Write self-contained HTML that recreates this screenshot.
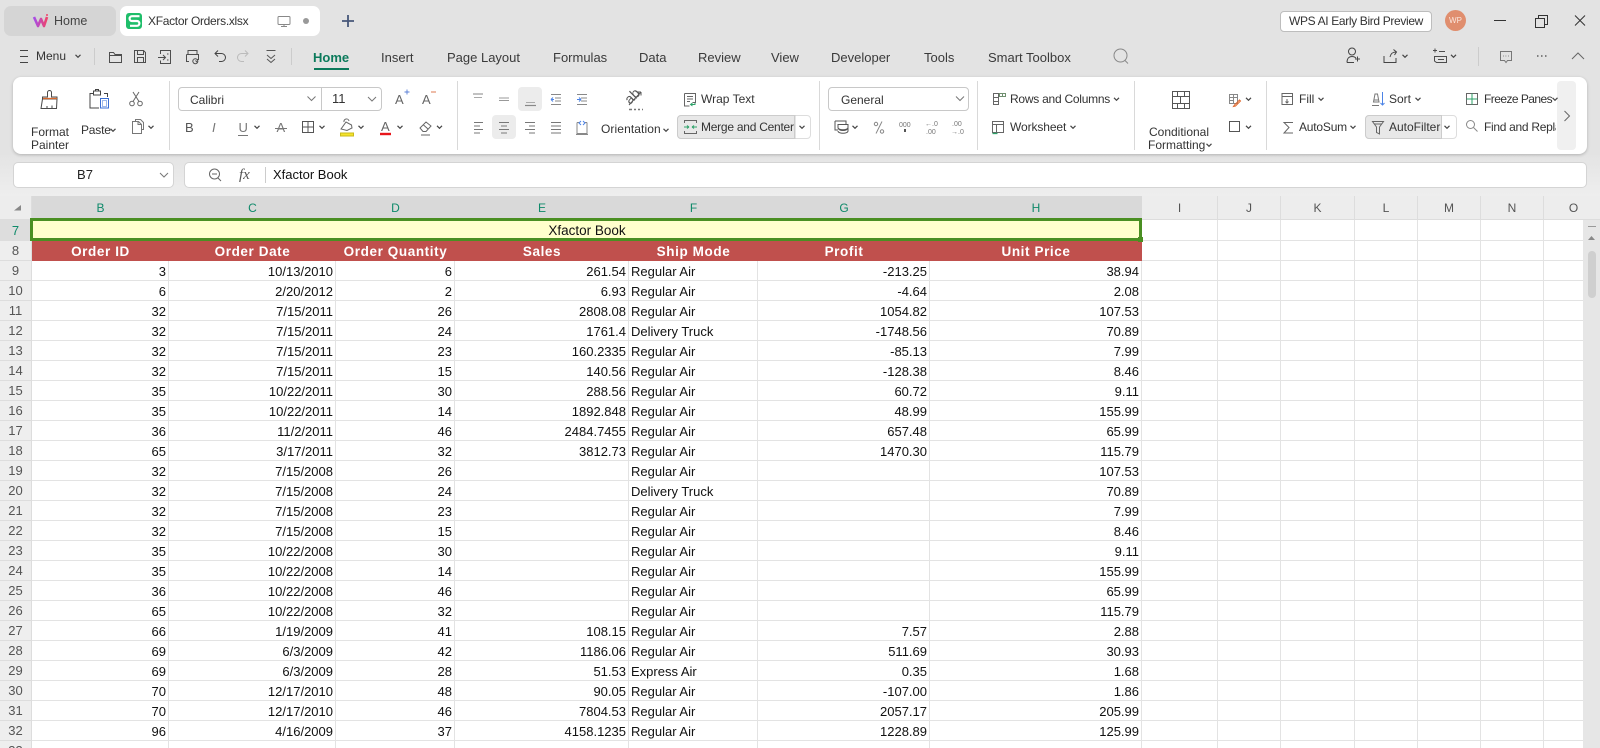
<!DOCTYPE html>
<html><head><meta charset="utf-8"><title>XFactor Orders.xlsx</title>
<style>
html,body{margin:0;padding:0;width:1600px;height:748px;overflow:hidden;background:#e3e3e3;font-family:"Liberation Sans",sans-serif;color:#333}
.a{position:absolute;box-sizing:border-box}
.t{position:absolute;white-space:nowrap;line-height:16px;font-size:12px;color:#333}
.m{font-size:13px;color:#3a3a3a}
.c{text-align:center;transform:translateX(-50%)}
svg.i{position:absolute;left:0;top:0;z-index:5;pointer-events:none}
svg text{font-family:"Liberation Sans",sans-serif;stroke:none}
#g{position:absolute;left:0;top:196px;width:1600px;height:552px;overflow:hidden;background:#fff}
table{border-collapse:separate;border-spacing:0;table-layout:fixed;width:1604px;position:absolute;left:0;top:0}
td{box-sizing:border-box;padding:2px 2px 0 2px;border-right:1px solid #e3e3e3;border-bottom:1px solid #e3e3e3;font-size:13px;line-height:16px;height:20px;color:#111;text-align:right;white-space:nowrap;overflow:hidden;background:#fff}
td.l{text-align:left}
td.r{background:#eee;color:#555;text-align:center;font-size:13px;padding:1px 0 0 0;border-right:1px solid #ddd;border-bottom:1px solid #ddd}
tr.h td{background:#ededed;color:#555;text-align:center;font-size:12px;height:24px;border-right:1px solid #ddd;border-bottom:1px solid #ddd;padding:0}
tr.h td.s{background:#d9d9d9;color:#0f8a6a;border-right:0;border-bottom:0}
tr.x td{background:#c0504d;color:#fff;font-weight:bold;text-align:center;font-size:13.5px;letter-spacing:.6px;border:0;height:20px;padding:1px 0 0 0}
tr.x td.r{background:#eee;color:#555;font-weight:normal;font-size:13px;letter-spacing:0;border-right:1px solid #ddd;border-bottom:1px solid #ddd}
tr.x td.w{background:#fff;border-right:1px solid #e3e3e3;border-bottom:1px solid #e3e3e3}
td.ti{background:#ffc;text-align:center;height:21px;color:#111;border:0;padding:0;font-size:13.5px}
td.rs{background:#ddd!important;color:#0f8a6a!important;height:21px}
</style></head><body>

<div class="a" style="left:0;top:155px;width:1600px;height:41px;background:linear-gradient(#e4e4e4,#eee)"></div>
<div class="a" style="left:4px;top:6px;width:112px;height:30px;background:#d5d5d5;border-radius:7px"></div>
<div class="a" style="left:120px;top:6px;width:200px;height:30px;background:#fff;border-radius:7px"></div>
<div class="t" style="left:54px;top:13px;color:#444;font-size:12.5px">Home</div>
<div class="a" style="left:126px;top:13px;width:16px;height:16px;background:#1fbe6a;border-radius:3px"></div>
<div class="t" style="left:148px;top:13px;letter-spacing:-.3px">XFactor Orders.xlsx</div>

<div class="a" style="left:1280px;top:11px;width:152px;height:21px;background:#fff;border:1px solid #bdbdbd;border-radius:4px"></div>
<div class="t" style="left:1289px;top:13px;letter-spacing:-.35px">WPS AI Early Bird Preview</div>
<div class="a" style="left:1445px;top:10px;width:21px;height:21px;background:#e08e6e;border-radius:50%"></div>
<div class="t c" style="left:1455.500px;top:12.500px;font-size:8px;color:#fbe6dc">WP</div>

<div class="t" style="left:36px;top:48px;color:#333">Menu</div>
<div class="t m" style="left:313px;top:50px;font-weight:bold;color:#0b7a5b">Home</div>
<div class="a" style="left:314px;top:68px;width:35px;height:2px;background:#0b7a5b"></div>
<div class="t m" style="left:381px;top:50px">Insert</div>
<div class="t m" style="left:447px;top:50px">Page Layout</div>
<div class="t m" style="left:553px;top:50px">Formulas</div>
<div class="t m" style="left:639px;top:50px">Data</div>
<div class="t m" style="left:698px;top:50px">Review</div>
<div class="t m" style="left:771px;top:50px">View</div>
<div class="t m" style="left:831px;top:50px">Developer</div>
<div class="t m" style="left:924px;top:50px">Tools</div>
<div class="t m" style="left:988px;top:50px">Smart Toolbox</div>

<div class="a" style="left:13px;top:77px;width:1574px;height:77px;background:#fff;border-radius:8px;box-shadow:0 1px 3px rgba(0,0,0,.22)"></div>
<div class="a" style="left:169px;top:81px;width:1px;height:69px;background:#d9d9d9"></div>
<div class="a" style="left:457px;top:81px;width:1px;height:69px;background:#d9d9d9"></div>
<div class="a" style="left:819px;top:81px;width:1px;height:69px;background:#d9d9d9"></div>
<div class="a" style="left:977px;top:81px;width:1px;height:69px;background:#d9d9d9"></div>
<div class="a" style="left:1134px;top:81px;width:1px;height:69px;background:#d9d9d9"></div>
<div class="a" style="left:1266px;top:81px;width:1px;height:69px;background:#d9d9d9"></div>

<div class="t c" style="left:50px;top:124px">Format</div>
<div class="t c" style="left:50px;top:137px">Painter</div>
<div class="t" style="left:81px;top:122px;letter-spacing:-.2px">Paste</div>

<div class="a" style="left:178px;top:87px;width:204px;height:24px;border:1px solid #c8c8c8;border-radius:4px"></div>
<div class="a" style="left:321px;top:87px;width:1px;height:24px;background:#c8c8c8"></div>
<div class="t" style="left:190px;top:92px">Calibri</div>
<div class="t" style="left:332px;top:91px;font-size:13px">11</div>

<div class="a" style="left:518px;top:87px;width:24px;height:24px;background:#ececec;border-radius:4px"></div>
<div class="a" style="left:492px;top:115px;width:24px;height:24px;background:#ececec;border-radius:4px"></div>
<div class="t" style="left:601px;top:121px;letter-spacing:.1px">Orientation</div>
<div class="t" style="left:701px;top:91px">Wrap Text</div>
<div class="a" style="left:677px;top:115px;width:134px;height:24px;border:1px solid #ddd;border-radius:4px"></div>
<div class="a" style="left:677px;top:115px;width:118px;height:24px;background:#e8e8e8;border:1px solid #ccc;border-radius:4px 0 0 4px"></div>
<div class="t" style="left:701px;top:119px;letter-spacing:-.25px">Merge and Center</div>

<div class="a" style="left:828px;top:87px;width:141px;height:24px;border:1px solid #c8c8c8;border-radius:4px"></div>
<div class="t" style="left:841px;top:92px">General</div>
<div class="t" style="left:1010px;top:91px;letter-spacing:-.25px">Rows and Columns</div>
<div class="t" style="left:1010px;top:119px;letter-spacing:-.1px">Worksheet</div>
<div class="t c" style="left:1179px;top:124px">Conditional</div>
<div class="t" style="left:1148px;top:137px">Formatting</div>
<div class="t" style="left:1299px;top:91px">Fill</div>
<div class="t" style="left:1299px;top:119px;letter-spacing:-.2px">AutoSum</div>
<div class="t" style="left:1389px;top:91px">Sort</div>
<div class="a" style="left:1365px;top:115px;width:92px;height:24px;border:1px solid #ddd;border-radius:4px"></div>
<div class="a" style="left:1365px;top:115px;width:77px;height:24px;background:#e8e8e8;border:1px solid #ccc;border-radius:4px 0 0 4px"></div>
<div class="t" style="left:1389px;top:119px">AutoFilter</div>
<div class="t" style="left:1484px;top:91px;letter-spacing:-.55px">Freeze Panes</div>
<div class="a" style="left:1484px;top:119px;width:72px;height:16px;overflow:hidden"><div class="t" style="left:0;top:0;letter-spacing:-.3px">Find and Replace</div></div>
<div class="a" style="left:1557px;top:81px;width:19px;height:69px;background:#f0f0f0;border-radius:4px"></div>

<div class="a" style="left:13px;top:162px;width:161px;height:26px;background:#fff;border:1px solid #d4d4d4;border-radius:5px"></div>
<div class="a" style="left:184px;top:162px;width:1403px;height:26px;background:#fff;border:1px solid #d4d4d4;border-radius:5px"></div>
<div class="t c" style="left:85px;top:167px;font-size:13px;color:#222">B7</div>
<div class="t" style="left:239px;top:167px;font-family:'Liberation Serif',serif;font-style:italic;font-size:15px;color:#555">fx</div>
<div class="t" style="left:273px;top:167px;font-size:13px;color:#111">Xfactor Book</div>

<div id="g">
<table><colgroup><col style="width:32px"><col style="width:137px"><col style="width:167px"><col style="width:119px"><col style="width:174px"><col style="width:129px"><col style="width:172px"><col style="width:212px"><col style="width:76px"><col style="width:63px"><col style="width:74px"><col style="width:63px"><col style="width:63px"><col style="width:63px"><col style="width:60px"></colgroup>
<tr class="h"><td></td><td class="s">B</td><td class="s">C</td><td class="s">D</td><td class="s">E</td><td class="s">F</td><td class="s">G</td><td class="s">H</td><td>I</td><td>J</td><td>K</td><td>L</td><td>M</td><td>N</td><td>O</td></tr>
<tr><td class="r rs">7</td><td class="ti" colspan="7">Xfactor Book</td><td style="height:21px"></td><td></td><td></td><td></td><td></td><td></td><td></td></tr>
<tr class="x"><td class="r">8</td><td>Order ID</td><td>Order Date</td><td>Order Quantity</td><td>Sales</td><td>Ship Mode</td><td>Profit</td><td>Unit Price</td><td class="w"></td><td class="w"></td><td class="w"></td><td class="w"></td><td class="w"></td><td class="w"></td><td class="w"></td></tr>
<tr><td class="r">9</td><td>3</td><td>10/13/2010</td><td>6</td><td>261.54</td><td class="l">Regular Air</td><td>-213.25</td><td>38.94</td><td></td><td></td><td></td><td></td><td></td><td></td><td></td></tr>
<tr><td class="r">10</td><td>6</td><td>2/20/2012</td><td>2</td><td>6.93</td><td class="l">Regular Air</td><td>-4.64</td><td>2.08</td><td></td><td></td><td></td><td></td><td></td><td></td><td></td></tr>
<tr><td class="r">11</td><td>32</td><td>7/15/2011</td><td>26</td><td>2808.08</td><td class="l">Regular Air</td><td>1054.82</td><td>107.53</td><td></td><td></td><td></td><td></td><td></td><td></td><td></td></tr>
<tr><td class="r">12</td><td>32</td><td>7/15/2011</td><td>24</td><td>1761.4</td><td class="l">Delivery Truck</td><td>-1748.56</td><td>70.89</td><td></td><td></td><td></td><td></td><td></td><td></td><td></td></tr>
<tr><td class="r">13</td><td>32</td><td>7/15/2011</td><td>23</td><td>160.2335</td><td class="l">Regular Air</td><td>-85.13</td><td>7.99</td><td></td><td></td><td></td><td></td><td></td><td></td><td></td></tr>
<tr><td class="r">14</td><td>32</td><td>7/15/2011</td><td>15</td><td>140.56</td><td class="l">Regular Air</td><td>-128.38</td><td>8.46</td><td></td><td></td><td></td><td></td><td></td><td></td><td></td></tr>
<tr><td class="r">15</td><td>35</td><td>10/22/2011</td><td>30</td><td>288.56</td><td class="l">Regular Air</td><td>60.72</td><td>9.11</td><td></td><td></td><td></td><td></td><td></td><td></td><td></td></tr>
<tr><td class="r">16</td><td>35</td><td>10/22/2011</td><td>14</td><td>1892.848</td><td class="l">Regular Air</td><td>48.99</td><td>155.99</td><td></td><td></td><td></td><td></td><td></td><td></td><td></td></tr>
<tr><td class="r">17</td><td>36</td><td>11/2/2011</td><td>46</td><td>2484.7455</td><td class="l">Regular Air</td><td>657.48</td><td>65.99</td><td></td><td></td><td></td><td></td><td></td><td></td><td></td></tr>
<tr><td class="r">18</td><td>65</td><td>3/17/2011</td><td>32</td><td>3812.73</td><td class="l">Regular Air</td><td>1470.30</td><td>115.79</td><td></td><td></td><td></td><td></td><td></td><td></td><td></td></tr>
<tr><td class="r">19</td><td>32</td><td>7/15/2008</td><td>26</td><td></td><td class="l">Regular Air</td><td></td><td>107.53</td><td></td><td></td><td></td><td></td><td></td><td></td><td></td></tr>
<tr><td class="r">20</td><td>32</td><td>7/15/2008</td><td>24</td><td></td><td class="l">Delivery Truck</td><td></td><td>70.89</td><td></td><td></td><td></td><td></td><td></td><td></td><td></td></tr>
<tr><td class="r">21</td><td>32</td><td>7/15/2008</td><td>23</td><td></td><td class="l">Regular Air</td><td></td><td>7.99</td><td></td><td></td><td></td><td></td><td></td><td></td><td></td></tr>
<tr><td class="r">22</td><td>32</td><td>7/15/2008</td><td>15</td><td></td><td class="l">Regular Air</td><td></td><td>8.46</td><td></td><td></td><td></td><td></td><td></td><td></td><td></td></tr>
<tr><td class="r">23</td><td>35</td><td>10/22/2008</td><td>30</td><td></td><td class="l">Regular Air</td><td></td><td>9.11</td><td></td><td></td><td></td><td></td><td></td><td></td><td></td></tr>
<tr><td class="r">24</td><td>35</td><td>10/22/2008</td><td>14</td><td></td><td class="l">Regular Air</td><td></td><td>155.99</td><td></td><td></td><td></td><td></td><td></td><td></td><td></td></tr>
<tr><td class="r">25</td><td>36</td><td>10/22/2008</td><td>46</td><td></td><td class="l">Regular Air</td><td></td><td>65.99</td><td></td><td></td><td></td><td></td><td></td><td></td><td></td></tr>
<tr><td class="r">26</td><td>65</td><td>10/22/2008</td><td>32</td><td></td><td class="l">Regular Air</td><td></td><td>115.79</td><td></td><td></td><td></td><td></td><td></td><td></td><td></td></tr>
<tr><td class="r">27</td><td>66</td><td>1/19/2009</td><td>41</td><td>108.15</td><td class="l">Regular Air</td><td>7.57</td><td>2.88</td><td></td><td></td><td></td><td></td><td></td><td></td><td></td></tr>
<tr><td class="r">28</td><td>69</td><td>6/3/2009</td><td>42</td><td>1186.06</td><td class="l">Regular Air</td><td>511.69</td><td>30.93</td><td></td><td></td><td></td><td></td><td></td><td></td><td></td></tr>
<tr><td class="r">29</td><td>69</td><td>6/3/2009</td><td>28</td><td>51.53</td><td class="l">Express Air</td><td>0.35</td><td>1.68</td><td></td><td></td><td></td><td></td><td></td><td></td><td></td></tr>
<tr><td class="r">30</td><td>70</td><td>12/17/2010</td><td>48</td><td>90.05</td><td class="l">Regular Air</td><td>-107.00</td><td>1.86</td><td></td><td></td><td></td><td></td><td></td><td></td><td></td></tr>
<tr><td class="r">31</td><td>70</td><td>12/17/2010</td><td>46</td><td>7804.53</td><td class="l">Regular Air</td><td>2057.17</td><td>205.99</td><td></td><td></td><td></td><td></td><td></td><td></td><td></td></tr>
<tr><td class="r">32</td><td>96</td><td>4/16/2009</td><td>37</td><td>4158.1235</td><td class="l">Regular Air</td><td>1228.89</td><td>125.99</td><td></td><td></td><td></td><td></td><td></td><td></td><td></td></tr>
<tr><td class="r">33</td><td></td><td></td><td></td><td></td><td></td><td></td><td></td><td></td><td></td><td></td><td></td><td></td><td></td><td></td></tr>
</table>
<div class="a" style="left:1583px;top:24px;width:17px;height:528px;background:#e6e6e6"></div>
<div class="a" style="left:1588px;top:55px;width:8px;height:47px;background:#cfcfcf;border-radius:4px"></div>
<div class="a" style="left:1588px;top:30px;width:8px;height:1px;background:#999"></div>
<div class="a" style="left:30px;top:22px;width:1112px;height:23px;border:3px solid #4a8f22"></div>
<div class="a" style="left:1138px;top:41px;width:5px;height:5px;background:#4a8f22"></div>
</div>

<svg class="i" width="1600" height="748" viewBox="0 0 1600 748" fill="none" stroke="#555" stroke-width="1">
<defs>
<linearGradient id="w" x1="0" x2="1"><stop offset="0" stop-color="#a64de8"/><stop offset="1" stop-color="#f0436a"/></linearGradient>
<path id="k" d="M-2.5-1.2L0 1.3 2.5-1.2" stroke="#444" stroke-width="1.2"/>
<path id="v" d="M-4-2L0 2 4-2" stroke="#777"/>
</defs>
<path d="M34 17L38 26 41 19 44 26 47 17" stroke="url(#w)" stroke-width="2.6" stroke-linejoin="round"/>
<circle cx="47" cy="15" r="1" fill="#f0436a" stroke="none"/>
<path d="M130 25.800H137a2.400 2.400 0 0 0 0-4.800h-5a2.400 2.400 0 0 1 0-4.800h7.500" stroke="#fff" stroke-width="2.200"/>
<path d="M279 16.500h10a1 1 0 0 1 1 1v6a1 1 0 0 1-1 1h-10a1 1 0 0 1-1-1v-6a1 1 0 0 1 1-1zM281 26.500h6M284 24.500v2" stroke="#888"/>
<circle cx="306" cy="21" r="3" fill="#999" stroke="none"/>
<path d="M342 21h12M348 15v12" stroke="#47577a" stroke-width="1.800"/>
<path d="M1494 20.500h12M1535.500 18.500h9v9h-9zM1538.500 18.500v-3h9v9h-3M1575 15.500l10 10M1585 15.500l-10 10" stroke="#333"/>

<path d="M20 50.500h8M20 56.500h8M20 62.500h8" stroke="#444"/><use href="#k" x="78" y="56"/>
<path d="M94.500 48v17M291.500 48v17M1478.500 47v19" stroke="#ccc"/>
<path d="M109.500 52.500h4l1.500 2h6.500v8h-12zM109.500 55.500h12M134.500 50.500h9l2 2v10h-11zM137.500 50.500v4h6v-4M137.500 62.500v-5h6v5M160.500 54v-3.500h10v13h-10v-3M158 57.500h7M163 55l2.500 2.500-2.500 2.500M167 54h1.500M167 60h1.500M188 54v-3.500h9V54M186.500 54.500h12v5h-1M189 61.500h-2.500v-7M193.500 59.500a2.500 2.500 0 1 0 .1-.1M195.500 60.500l2 2" stroke="#4d4d4d"/>
<path d="M218 50.500l-3 3 3 3M215 53.500h6.500a3.500 3.500 0 0 1 0 8H219" stroke="#444"/>
<path d="M245 50.500l3 3-3 3M248 53.500h-6.500a3.500 3.500 0 0 0 0 8H244" stroke="#bbb"/>
<path d="M266.500 50.500h9M267 55l4 3.500 4-3.500M267 59l4 3.500 4-3.500" stroke="#555"/>
<circle cx="1120.500" cy="55.500" r="6.500" stroke="#888"/><path d="M1125 60.500l3 3" stroke="#888"/>
<circle cx="1352" cy="51.500" r="3.500" stroke="#444"/><path d="M1347 62.500c0-4 2-6 5-6s3 1 4 1.500M1347 62.500h7M1355 59h5M1357.500 56.500v5" stroke="#444"/>
<path d="M1384 56v6.500h12V58M1390 57c1-4 3-5 6-5M1393.500 49.500l3 2.500-2 3" stroke="#444"/><use href="#k" x="1405" y="56"/>
<path d="M1433 50.500h4M1435 48.500v4M1439 51.500h6M1434.500 56.500h12v6h-10l-2-1.500zM1438 59.500h6" stroke="#4c4c4c"/><use href="#k" x="1453.500" y="56"/>
<path d="M1500.500 51.500h11v9h-4l-1.500 2-1.500-2h-4zM1503 56h.8M1505.500 56h.8M1508 56h.8" stroke="#777"/>
<path d="M1537 56h1.500M1541 56h1.500M1545 56h1.500" stroke="#444" stroke-width="1.300"/>
<path d="M1572 59l6-6 6 6" stroke="#666"/>

<path d="M47.500 92.500a2 2 0 0 1 4 0V97h5.500v2H42.500v-2h5zM42.500 99l-1.500 9.500h15.500l.5-9.500M47 108.500v-2.500M52 108.500v-3" stroke="#4a4a4a"/><path d="M43 98.500h14" stroke="#d8692e" stroke-width="1.300"/>
<path d="M94 93.500h-4v14.500h9M104 93.500h3.500V97M93.500 91h7v4h-7zM95.500 91v-1.500h3V91" stroke="#444"/><path d="M100.500 98.500h8v9.500h-8z" stroke="#3b6fd4"/><path d="M102.500 100.500h4v6h-4z" stroke="#9db8ec"/>
<circle cx="132" cy="103.500" r="2.300" stroke="#666"/><circle cx="140" cy="103.500" r="2.300" stroke="#666"/><path d="M133 101.500L139 92M139 101.500L133 92" stroke="#666"/>
<path d="M132.500 121.500h6l3 3v9h-9zM138 121.500v3h3" stroke="#777"/><path d="M135.500 121v-1.500h5l3 3v7h-2" stroke="#777"/><use href="#k" x="151" y="127"/><use href="#k" x="113" y="130"/>
<use href="#v" x="311.500" y="98.500"/><use href="#v" x="372" y="99"/>
<text x="395" y="104" font-size="13" fill="#666">A</text><path d="M404.500 92h5M407 89.500v5" stroke="#5a7fd6" stroke-width=".9"/>
<text x="422" y="104" font-size="13" fill="#666">A</text><path d="M431 92h5" stroke="#d86b3f" stroke-width=".9"/>
<text x="185" y="132" font-size="13" fill="#555">B</text>
<text x="212" y="132" font-size="13" font-style="italic" fill="#777">I</text>
<text x="238.500" y="132" font-size="13" fill="#777">U</text><path d="M238 135.500h10" stroke="#777"/><use href="#k" x="257" y="127"/>
<text x="276.500" y="132" font-size="13" fill="#777">A</text><path d="M275 128.500h12" stroke="#777"/>
<path d="M302.500 121.500h11v11h-11zM308 121.500v11M302.500 127h11" stroke="#555"/><use href="#k" x="322" y="127"/>
<path d="M341 129l5-7 5.500 3 .5 3-5 2.500zM344 122a2.500 2.500 0 0 1 5-1" stroke="#666"/><path d="M340.500 133h13v3h-13z" fill="#f4e32a" stroke="#caba1a"/><use href="#k" x="361" y="127"/>
<text x="381" y="131" font-size="13" fill="#666">A</text><path d="M380 134h11" stroke="#e8161b" stroke-width="2.400"/><use href="#k" x="400" y="127"/>
<path d="M420 128l6-6 5 4-5 5.500h-3zM423 124.500l5 4.500M421 135h9" stroke="#666"/><use href="#k" x="439.500" y="127"/>

<path d="M473 94h10" stroke="#999" stroke-width="1.200"/><path d="M474 97.500h8" stroke="#aaa"/>
<path d="M499 98h10M499 100.500h10" stroke="#999"/>
<path d="M526 102.500h9" stroke="#aaa"/><path d="M525 105.500h11" stroke="#888" stroke-width="1.200"/>
<path d="M551 94.500h10M555 98h6M555 101h6M551 104.500h10" stroke="#888"/><path d="M551 99.500h3M551 99.500l2-2M551 99.500l2 2" stroke="#4c83e6"/>
<path d="M577 94.500h10M581 98h6M581 101h6M577 104.500h10" stroke="#888"/><path d="M577 99.500h4M581 99.500l-2-2M581 99.500l-2 2" stroke="#4c83e6"/>
<path d="M474 122.500h9M474 126h6M474 129.500h9M474 133h6" stroke="#777"/>
<path d="M499 122.500h10M501 126h6M499 129.500h10M501 133h6" stroke="#777"/>
<path d="M525 122.500h10M529 126h6M525 129.500h10M529 133h6" stroke="#777"/>
<path d="M551 122.500h10M551 126h10M551 129.500h10M551 133h10" stroke="#777"/>
<path d="M577 122.500v11h10v-11M576 134.500h12M577 122.500h2M585 122.500h2" stroke="#888"/><path d="M581 121l-2 2 2 2M583 121l2 2-2 2" stroke="#4c83e6"/>

<text transform="translate(630 105) rotate(-45)" font-size="14" fill="#555">ab</text>
<path d="M629 105l12-13M641 92h-3.500M641 92v3.500" stroke="#555"/><path d="M629 109.500h3M634 109.500h2M638 109.500h2M642 109.500h1" stroke="#777" stroke-width="1.400"/>
<path d="M684.500 93.500h11v9h-3M684.500 93.500v12.500h5M687 96.500h6M687 99h6M687 101.500h3" stroke="#666"/><path d="M695 103v1.500h-4M692.500 103l-2 1.500 2 1.500" stroke="#2ea36a"/><use href="#k" x="666" y="130"/>
<path d="M684.500 123v-2.500h12v2.500M684.500 131v2.500h12v-2.500" stroke="#666"/><path d="M684 127h5M689 127l-2-1.500M689 127l-2 1.500M697 127h-5M692 127l2-1.500M692 127l2 1.500" stroke="#2ea36a"/>
<path d="M795 115v24" stroke="#ccc"/><use href="#k" x="802" y="127"/>
<use href="#v" x="960" y="98.500"/>
<path d="M835 121h11v3M835 121v9h3M838 124.500h10v3c0 4-10 4-10 0zM838 127.500c0 3 10 3 10 0M838 131c0 3 10 3 10 0v-3" stroke="#555"/><use href="#k" x="855" y="127"/>
<path d="M882 121.500l-6 12" stroke="#888"/><circle cx="876" cy="124" r="1.700" stroke="#888"/><circle cx="882" cy="131.500" r="1.700" stroke="#888"/>
<text x="899" y="127" font-size="7" fill="#777">000</text><path d="M905 129v3" stroke="#555" stroke-width="2"/>
<text x="925" y="126" font-size="7" fill="#777">←.0</text><text x="926" y="134" font-size="7" fill="#777">.00</text>
<text x="952" y="126" font-size="7" fill="#777">.00</text><text x="951" y="134" font-size="7" fill="#777">→.0</text>

<path d="M993.500 93.500h5v4h-5zM993.500 97.500h5v4h-5zM993.500 101.500h5v3h-5z" stroke="#666"/><path d="M999.500 93.500h3v3h-3zM1002.500 93.500h3v3h-3z" stroke="#6f8f6f"/><use href="#k" x="1116.500" y="99"/>
<path d="M992.500 121.500h11v11h-11zM992.500 124.500h11M996.500 124.500v8" stroke="#666"/><path d="M992.500 133.500h5" stroke="#2ea36a" stroke-width="1.300"/><use href="#k" x="1073" y="127"/>

<path d="M1172.500 91.500h17v17h-17zM1172.500 96.500h17M1172.500 103.500h17M1177.500 91.500v5M1184.500 91.500v5M1180.500 96.500v7M1177.500 103.500v5M1184.500 103.500v5" stroke="#555"/><use href="#k" x="1209" y="145"/>
<path d="M1229.500 94.500h8v9h-8zM1229.500 97.500h8M1229.500 100.500h4M1233.500 94.500v9" stroke="#888"/><path d="M1234.500 105l5-5 1 1-5 5-2 .5z" stroke="#e0692e"/><use href="#k" x="1248.500" y="99"/>
<path d="M1229.500 121.500h10v10h-10z" stroke="#555"/><use href="#k" x="1248.500" y="127"/>

<path d="M1282 93.500h10.500v11H1282zM1282 96.500h10.500M1287 99v4M1285.500 101.500l1.500 1.500 1.500-1.500" stroke="#666"/><use href="#k" x="1321" y="99"/>
<path d="M1293 122.500h-9l5 5-5 5.500h9" stroke="#666"/><use href="#k" x="1353" y="127"/>
<path d="M1373.500 102l1.500-8h2.500l1.500 8zM1372 105.500h7M1374 100h4" stroke="#777"/><path d="M1382.500 92v13M1380.500 103l2 2 2-2" stroke="#4c83e6"/><use href="#k" x="1418" y="99"/>
<path d="M1372.500 121.500h11l-4 5.500v7l-3-1.500V127zM1374 124h8" stroke="#666"/><path d="M1441.500 115v24" stroke="#ccc"/><use href="#k" x="1447" y="127"/>
<path d="M1466.500 93.500h11v11h-11zM1472 93.500v11M1466.500 99h11" stroke="#666"/><path d="M1466.500 99h11M1472 93.500v11" stroke="#2ea36a"/><use href="#k" x="1555" y="99"/>
<circle cx="1470.500" cy="124.500" r="4" stroke="#888"/><path d="M1473.500 127.500l4 4" stroke="#888"/>
<path d="M1564.500 111l5 5-5 5" stroke="#666"/>

<use href="#v" x="164" y="175"/>
<circle cx="214.500" cy="174" r="5" stroke="#666"/><path d="M212 174h5M218 178l3 3" stroke="#666"/>
<path d="M265.500 167v16" stroke="#ccc"/>
<path d="M21 205l-7 5.500h7z" fill="#888" stroke="none"/>
<path d="M1591.500 236l-3.500 4h7z" fill="#888" stroke="none"/>
</svg>
</body></html>
